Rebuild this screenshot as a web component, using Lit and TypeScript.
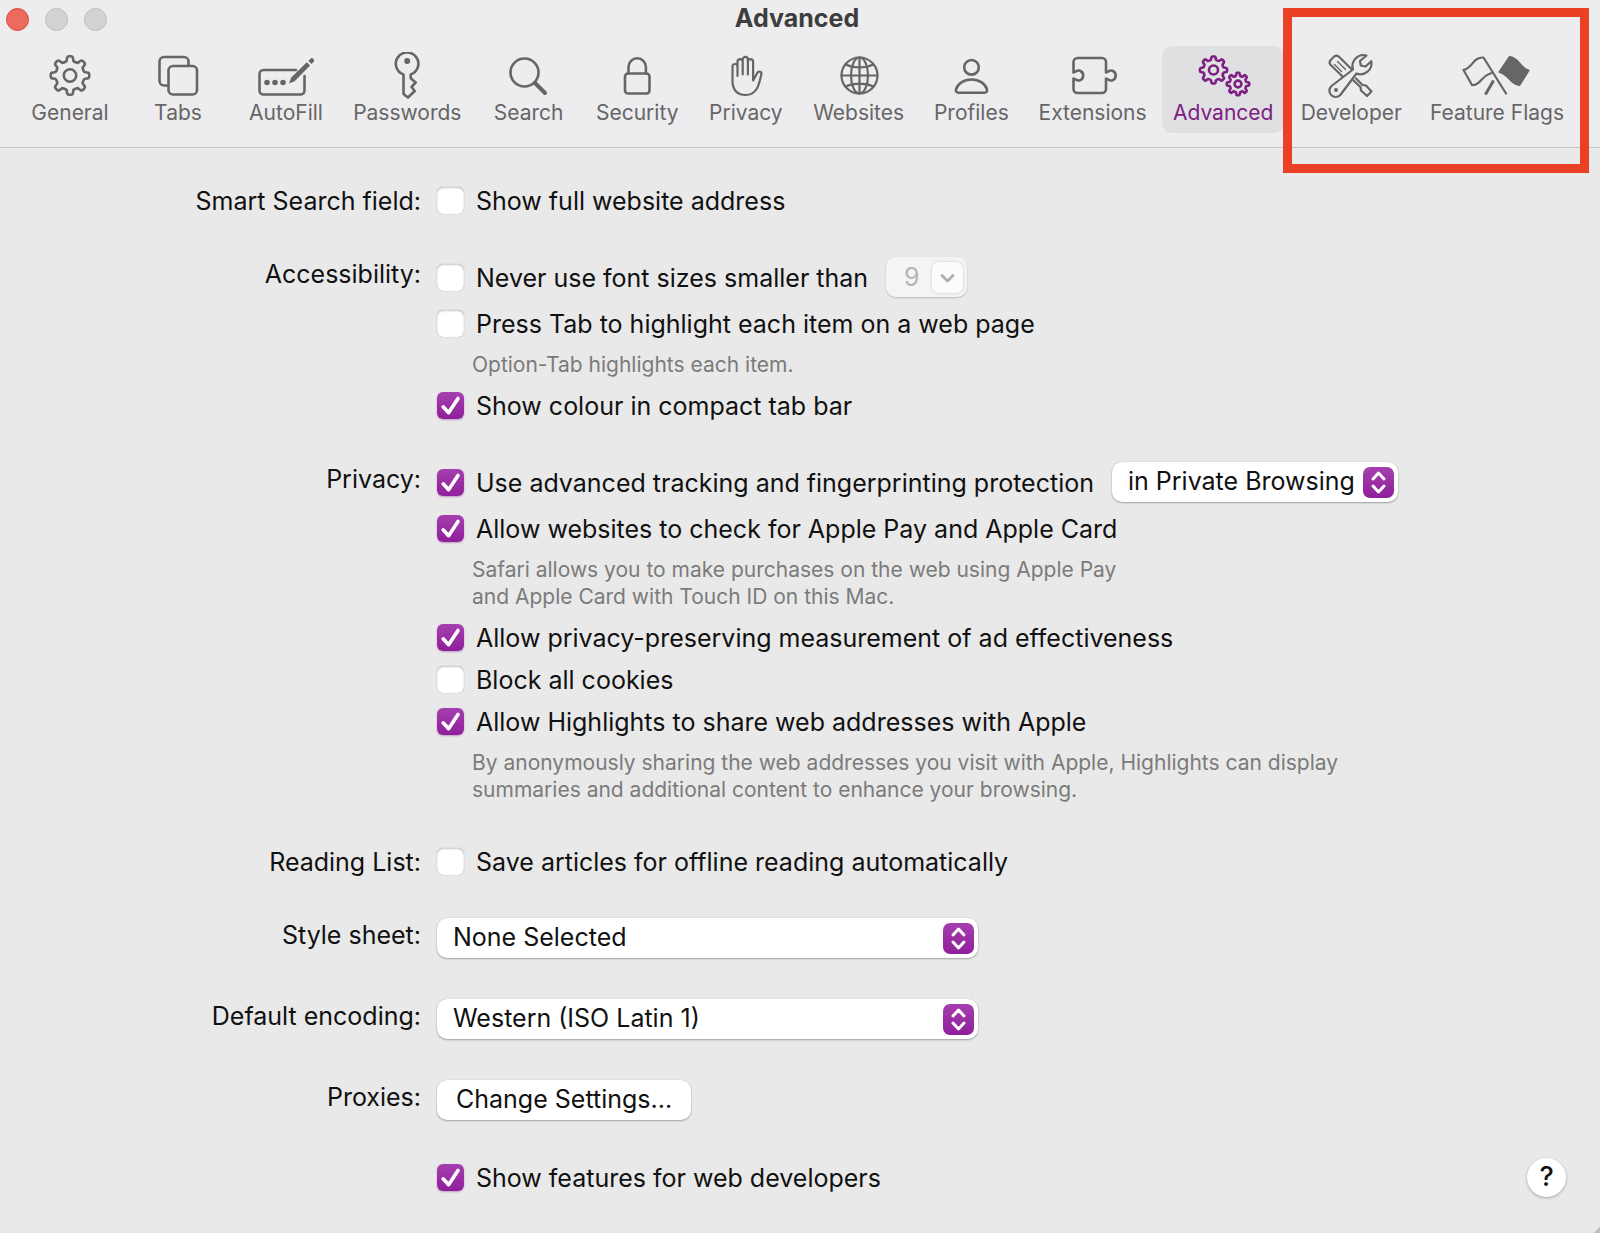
import { LitElement, html, svg, css, nothing, type SVGTemplateResult } from "lit";
import { customElement, property, state } from "lit/decorators.js";
import { classMap } from "lit/directives/class-map.js";

/** Closed outline of a cog: eight rounded teeth around (cx, cy). */
function gear(cx: number, cy: number, outer: number, inner: number, teeth = 8): string {
  const step = (Math.PI * 2) / teeth;
  const at = (r: number, a: number) =>
    `${(cx + r * Math.sin(a)).toFixed(2)} ${(cy - r * Math.cos(a)).toFixed(2)}`;
  let d = "";
  for (let i = 0; i < teeth; i++) {
    const a = i * step;
    const shoulder = outer - (outer - inner) * 0.25;
    d += `${i ? "L" : "M"}${at(inner, a - step * 0.3)}`;
    d += `L${at(shoulder, a - step * 0.2)}`;
    d += `Q${at(outer, a - step * 0.18)} ${at(outer, a - step * 0.08)}`;
    d += `L${at(outer, a + step * 0.08)}`;
    d += `Q${at(outer, a + step * 0.18)} ${at(shoulder, a + step * 0.2)}`;
    d += `L${at(inner, a + step * 0.3)}`;
    d += `Q${at(inner - 0.8, a + step * 0.5)} ${at(inner, a + step * 0.7)}`;
  }
  return d + "Z";
}

const ICONS: Record<string, SVGTemplateResult> = {
  general: svg`<path d=${gear(36, 23.5, 19.3, 14.8)} /><circle cx="36" cy="23.5" r="6.2" />`,
  tabs: svg`
    <path d="M26 33.5h-4a4.5 4.5 0 0 1-4.500-4.500V9.500A4.500 4.500 0 0 1 22 5h20a4.500 4.500 0 0 1 4.500 4.500V13" />
    <rect x="26.500" y="14" width="28.500" height="28.500" rx="4.500" />`,
  autofill: svg`
    <path d="M46 18H13.500A4 4 0 0 0 9.500 22v16.500a4 4 0 0 0 4 4h37a4 4 0 0 0 4-4V24" />
    <g class="solid"><circle cx="17" cy="30.500" r="2.800" /><circle cx="25" cy="30.500" r="2.800" /><circle cx="33" cy="30.500" r="2.800" />
    <path d="M39 31.500l2.200-6L56.800 10.300l3.300 3.300L44.600 29.200z" /><path d="M58.300 8.900l2-2a2.200 2.200 0 0 1 3.200 3.200l-1.900 2z" /></g>`,
  passwords: svg`
    <path d="M32.500 22.500A11.300 11.300 0 1 1 39.700 22.500v3.800l5 4.200-4.200 4.300 3.200 4.200-6.700 6.500-4.500-3.500z" />
    <circle class="solid" cx="36.200" cy="9" r="3" />`,
  search: svg`<circle cx="31.500" cy="20.500" r="14" /><path class="heavy" d="M42 31l10 10" />`,
  security: svg`
    <rect x="24" y="21.500" width="24.500" height="20" rx="3" />
    <path d="M27.500 21.500V15a8.700 8.700 0 0 1 17.400 0v6.500" />`,
  privacy: svg`<path class="thin" d="M22.500 25V14.500a2.500 2.500 0 0 1 5 0V24M27.500 24V9.700a2.600 2.600 0 0 1 5.200 0V22.500M32.700 22.500V7.500a2.600 2.600 0 0 1 5.200 0V22.500M37.900 22.500V9.700a2.600 2.600 0 0 1 5.200 0V28.500l4-7.300c1.500-2.700 5-1.500 4.200 1.400C49 32 47.500 43 35.500 43c-9 0-13-6-13-14V24" />`,
  websites: svg`<g class="thin"><circle cx="36.500" cy="23.500" r="18" />
    <ellipse cx="36.500" cy="23.500" rx="8.500" ry="18" /><path d="M36.500 5.500v36M18.500 23.500h36M22.500 12.500c8 3.800 20 3.800 28 0M22.500 34.500c8-3.800 20-3.800 28 0" /></g>`,
  profiles: svg`<circle cx="36.500" cy="15.300" r="7.300" />
    <path d="M23.500 40.700c-2 0-3-1.400-2.500-3.200C22.500 32 28.500 27.500 36.500 27.500S50.500 32 52 37.500c.500 1.800-.500 3.200-2.500 3.200z" />`,
  extensions: svg`<path d="M16.500 20.500V10a4 4 0 0 1 4-4H45a4 4 0 0 1 4 4V20.500c2.500-1 4-2.700 6.500-1.800a5.200 5.200 0 0 1 0 9.600c-2.500.900-4-.800-6.500-1.800V37a4 4 0 0 1-4 4H20.500a4 4 0 0 1-4-4V26.500c2.500 1 4 2.700 6.500 1.800a5.200 5.200 0 0 0 0-9.600c-2.500-.900-4 .800-6.500 1.800z" />`,
  advanced: svg`<path d=${gear(26.500, 18, 13.600, 10.600)} /><circle cx="26.500" cy="18" r="4.500" />
    <path d=${gear(51, 32, 11.300, 8.700)} /><circle cx="51" cy="32" r="3.400" />`,
  developer: svg`<g class="thin">
    <path d="M27.500 24.500L15.500 12.800a3.500 3.500 0 0 1 0-4.500l3.700-3.800a3.500 3.500 0 0 1 4.500 0L37 17.500" />
    <path class="hair" d="M22.500 9.500l8 8M19.500 12.500l7 7" />
    <path d="M38.500 28.500l7 6.500.500 3.500 6 5.500 4.500-4.500-5.500-6-3.500-.500-6.500-6.500" />
    <path d="M51.500 3.500a11 11 0 0 0-13.500 14L16.500 34a6.300 6.300 0 1 0 8.800 9L41.500 21.500a11 11 0 0 0 14.800-12.300L50.500 14.500l-4.700-1-.800-4.500z" />
    </g><circle class="solid" cx="21" cy="38" r="2" />`,
  flags: svg`<g class="thin">
    <path d="M2.500 18L11 33C19.500 34 21 22.500 31 21M2.500 18C12 16 11.500 5 22.500 5.500L45 41.500" />
    <path class="heavy-thin" d="M32 29.500l-7 12" /></g>
    <path class="flag" d="M48.500 5C58 5.500 58.500 16 67.500 18.500L58.500 33C49.500 33 47.500 21.500 38.500 20z" />`,
};

const TOOLS: [string, string][] = [
  ["general", "General"],
  ["tabs", "Tabs"],
  ["autofill", "AutoFill"],
  ["passwords", "Passwords"],
  ["search", "Search"],
  ["security", "Security"],
  ["privacy", "Privacy"],
  ["websites", "Websites"],
  ["profiles", "Profiles"],
  ["extensions", "Extensions"],
  ["advanced", "Advanced"],
];

const DEV_TOOLS: [string, string][] = [
  ["developer", "Developer"],
  ["flags", "Feature Flags"],
];

@customElement("check-row")
class CheckRow extends LitElement {
  @property() label = "";
  @property({ type: Boolean }) checked = false;

  static styles = css`
    :host { display: block; }
    label { display: flex; align-items: center; gap: 12px; min-height: 40px; }
    .box { display: grid; flex: none; }
    .box > * { grid-area: 1 / 1; }
    input {
      appearance: none; margin: 0; width: 27px; height: 27px; border-radius: 6px; background: #fff;
      box-shadow: inset 0 1px 2px rgb(0 0 0 / 22%), 0 0 1px rgb(0 0 0 / 35%);
    }
    input:checked {
      background: linear-gradient(#a53fae, #8f1f9b);
      box-shadow: 0 1px 2px rgb(143 31 155 / 40%);
    }
    svg { width: 27px; height: 27px; fill: none; stroke: #fff; stroke-width: 3.6; stroke-linecap: round; stroke-linejoin: round; pointer-events: none; }
    input:not(:checked) + svg { visibility: hidden; }
    .text { padding-top: 2px; }
  `;

  render() {
    return html`<label>
      <span class="box">
        <input type="checkbox" .checked=${this.checked}
          @change=${(e: Event) => (this.checked = (e.target as HTMLInputElement).checked)} />
        <svg viewBox="0 0 27 27" aria-hidden="true"><path d="M6.200 14.800l5.400 5.900L21 6.500" /></svg>
      </span>
      <span class="text">${this.label}</span>
    </label>`;
  }
}

@customElement("popup-select")
class PopupSelect extends LitElement {
  @property() label = "";
  @property({ type: Array }) options: string[] = [];
  @property({ type: Boolean }) disabled = false;

  static styles = css`
    :host { display: block; }
    .wrap { display: grid; align-items: center; }
    .wrap > * { grid-area: 1 / 1; }
    select {
      appearance: none; width: 100%; height: 40px; margin: 0; padding: 0 36px 2px 16px; border: 0;
      border-radius: 10px; background: #fff; color: #111; font: inherit;
      box-shadow: 0 1px 2px rgb(0 0 0 / 30%), 0 0 1px rgb(0 0 0 / 20%);
    }
    select:disabled { padding: 0 36px 0 18px; background: #f4f4f4; color: #b4b4b4; opacity: 1; box-shadow: 0 1px 2px rgb(0 0 0 / 20%); }
    svg { justify-self: end; width: 31px; height: 31px; margin-right: 4px; fill: none; stroke: #fff; stroke-width: 3; stroke-linecap: round; stroke-linejoin: round; pointer-events: none; }
    .arrows { border-radius: 7px; background: linear-gradient(#a53fae, #8f1f9b); }
    .chevron { border-radius: 7px; background: #fbfbfb; stroke: #b0b0b0; box-shadow: 0 0 3px rgb(0 0 0 / 18%); }
  `;

  render() {
    return html`<div class="wrap">
      <select aria-label=${this.label} ?disabled=${this.disabled}>
        ${this.options.map((o) => html`<option>${o}</option>`)}
      </select>
      ${this.disabled
        ? html`<svg class="chevron" viewBox="0 0 31 31" aria-hidden="true"><path d="M10 13.500l5.500 5.500 5.500-5.500" /></svg>`
        : html`<svg class="arrows" viewBox="0 0 31 31" aria-hidden="true"><path d="M10 12l5.500-6 5.500 6M10 19l5.500 6 5.500-6" /></svg>`}
    </div>`;
  }
}

@customElement("app-root")
class AppRoot extends LitElement {
  @state() private current = "advanced";

  static styles = css`
    :host {
      display: flex; flex-direction: column; min-height: 100vh; box-sizing: border-box;
      background: linear-gradient(135deg, transparent 50%, #bfc0c3 55%) right bottom / 7px 7px no-repeat, #e9e9e9;
      color: #111; font: 25px/34px Inter, "Liberation Sans", sans-serif;
    }
    header { background: #edecee; border-bottom: 1px solid #c8c8ca; }
    .titlebar { display: grid; grid-template-columns: 1fr auto 1fr; align-items: center; height: 38px; padding: 0 12px 0 6px; }
    .lights { display: flex; gap: 16px; }
    .light { width: 23px; height: 23px; padding: 0; border: 1px solid #bcbcbc; border-radius: 50%; background: #d3d3d4; }
    .light.close { border-color: #dc4b3f; background: #ed6a5e; }
    h1 { margin: 0; padding-bottom: 2px; color: #3d3d3d; font-size: 25px; font-weight: 700; line-height: 34px; }
    nav { display: flex; justify-content: center; gap: 4px; padding: 8px 24px 14px 18px; }
    .group { position: relative; display: flex; gap: 4px; }
    .tool {
      display: flex; flex-direction: column; align-items: center; justify-content: flex-start; min-width: 104px; height: 87px;
      padding: 6px 12px; border: 0; border-radius: 11px; background: none; color: #666; white-space: nowrap;
      font: inherit; font-size: 21px; line-height: 26px;
    }
    .tool.on { background: #e0dfe1; color: #7d2083; }
    .tool svg { flex: none; width: 72px; height: 48px; fill: none; stroke: currentColor; stroke-width: 2.6; stroke-linecap: round; stroke-linejoin: round; }
    .thin { stroke-width: 2.2; }
    .hair { stroke-width: 1.4; }
    .heavy { stroke-width: 4; }
    .heavy-thin { stroke-width: 3; }
    .solid { fill: currentColor; stroke: none; }
    .flag { fill: currentColor; stroke-width: 2; }
    .callout { position: absolute; inset: -38px -13px -40px -6px; border: 9px solid #ea4025; pointer-events: none; }

    main { flex: 1; display: flex; flex-direction: column; gap: 37px; padding: 32px 34px 32px 0; }
    section { display: grid; grid-template-columns: minmax(200px, 421px) minmax(0, 1fr); column-gap: 16px; }
    h2 { margin: 0; font-size: 25px; font-weight: 400; line-height: 34px; text-align: right; }
    h2.level { padding-top: 4px; }
    .rows { display: flex; flex-direction: column; align-items: flex-start; gap: 6px; }
    .tight { display: flex; flex-direction: column; gap: 2px; }
    .inline { display: flex; align-items: center; gap: 18px; }
    .hint { margin: 2px 0 1px 35px; color: #7b7b7b; font-size: 21px; line-height: 27px; }
    .popups { display: flex; flex-direction: column; gap: 41px; }
    .wide { width: 541px; }
    .size { width: 81px; }
    .mode { width: 286px; }
    .push {
      height: 40px; padding: 0 19px 2px; border: 0; border-radius: 10px; background: #fff; color: #111; font: inherit;
      box-shadow: 0 1px 2px rgb(0 0 0 / 30%), 0 0 1px rgb(0 0 0 / 20%);
    }
    .footer { display: flex; justify-content: space-between; align-items: center; }
    .help {
      width: 39px; height: 39px; padding: 0; border: 0; border-radius: 50%; background: #fff; color: #111;
      font: inherit; font-size: 27px; font-weight: 500; box-shadow: 0 1px 3px rgb(0 0 0 / 30%);
    }
  `;

  private tool([id, name]: [string, string]) {
    const on = id === this.current;
    return html`<button class=${classMap({ tool: true, on })} aria-current=${on ? "page" : nothing}
      @click=${() => (this.current = id)}>
      <svg viewBox="0 0 72 48" aria-hidden="true">${ICONS[id]}</svg>${name}
    </button>`;
  }

  render() {
    return html`
      <header>
        <div class="titlebar">
          <div class="lights">
            <button class="light close" aria-label="Close"></button>
            <button class="light" aria-label="Minimise"></button>
            <button class="light" aria-label="Zoom"></button>
          </div>
          <h1>Advanced</h1>
        </div>
        <nav>
          ${TOOLS.map((t) => this.tool(t))}
          <div class="group">${DEV_TOOLS.map((t) => this.tool(t))}<div class="callout"></div></div>
        </nav>
      </header>
      <main>
        <section>
          <h2 class="level">Smart Search field:</h2>
          <div class="rows"><check-row label="Show full website address"></check-row></div>
        </section>
        <section>
          <h2>Accessibility:</h2>
          <div class="rows">
            <div class="inline">
              <check-row label="Never use font sizes smaller than"></check-row>
              <popup-select class="size" label="Minimum font size" disabled .options=${["9"]}></popup-select>
            </div>
            <check-row label="Press Tab to highlight each item on a web page"></check-row>
            <p class="hint">Option-Tab highlights each item.</p>
            <check-row checked label="Show colour in compact tab bar"></check-row>
          </div>
        </section>
        <section>
          <h2>Privacy:</h2>
          <div class="rows">
            <div class="inline">
              <check-row checked label="Use advanced tracking and fingerprinting protection"></check-row>
              <popup-select class="mode" label="Protection applies" .options=${["in Private Browsing", "in all browsing"]}></popup-select>
            </div>
            <check-row checked label="Allow websites to check for Apple Pay and Apple Card"></check-row>
            <p class="hint">Safari allows you to make purchases on the web using Apple Pay<br />and Apple Card with Touch ID on this Mac.</p>
            <div class="tight">
              <check-row checked label="Allow privacy-preserving measurement of ad effectiveness"></check-row>
              <check-row label="Block all cookies"></check-row>
              <check-row checked label="Allow Highlights to share web addresses with Apple"></check-row>
            </div>
            <p class="hint">By anonymously sharing the web addresses you visit with Apple, Highlights can display<br />summaries and additional content to enhance your browsing.</p>
          </div>
        </section>
        <section>
          <h2 class="level">Reading List:</h2>
          <div class="rows"><check-row label="Save articles for offline reading automatically"></check-row></div>
        </section>
        <div class="popups">
          <section>
            <h2>Style sheet:</h2>
            <popup-select class="wide" label="Style sheet" .options=${["None Selected"]}></popup-select>
          </section>
          <section>
            <h2>Default encoding:</h2>
            <popup-select class="wide" label="Default encoding" .options=${["Western (ISO Latin 1)", "Unicode (UTF-8)"]}></popup-select>
          </section>
          <section>
            <h2>Proxies:</h2>
            <div class="rows"><button class="push">Change Settings...</button></div>
          </section>
        </div>
        <section>
          <span></span>
          <div class="footer">
            <check-row checked label="Show features for web developers"></check-row>
            <button class="help" aria-label="Help">?</button>
          </div>
        </section>
      </main>
    `;
  }
}
